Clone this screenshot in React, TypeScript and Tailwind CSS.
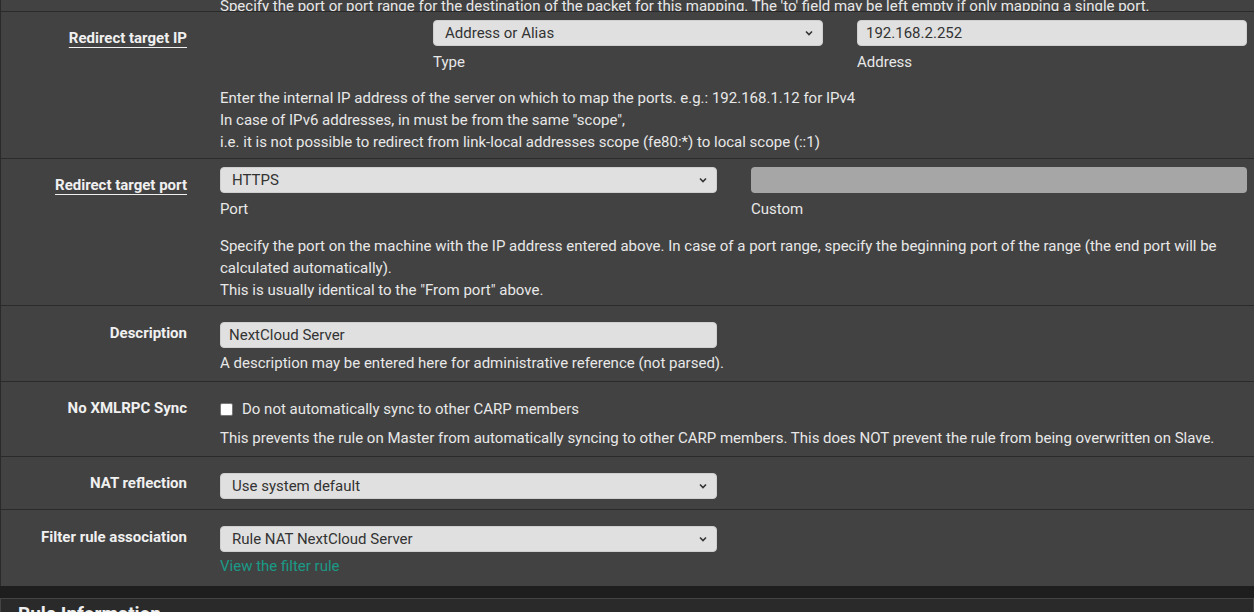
import React from "react";

const Chevron = () => (
  <svg width="10" height="10" viewBox="0 0 10 10" className="shrink-0">
    <path d="M2 3.5 L5 6.5 L8 3.5" fill="none" stroke="#333" strokeWidth="1.6" />
  </svg>
);

const Select = ({ text, cls }: { text: string; cls: string }) => (
  <div className={`h-[26px] rounded-[4px] bg-[#e0e0e0] border border-[#cfcfcf] flex items-center justify-between pl-[11px] pr-[8px] text-[#333] ${cls}`}>
    <span>{text}</span>
    <Chevron />
  </div>
);

const Row = ({ label, underline, children, cls }: { label: string; underline?: boolean; children: React.ReactNode; cls: string }) => (
  <div className={`flex border-b border-[#2a2a2a] ${cls}`}>
    <div className="w-[186px] shrink-0 text-right font-bold text-[#f0f0f0] leading-5">
      <span className={underline ? "underline underline-offset-[4px] decoration-1" : ""}>{label}</span>
    </div>
    <div className="flex-1 pl-[33px] pr-[7px]">{children}</div>
  </div>
);

export default function App() {
  return (
    <div className="w-[1254px] h-[612px] overflow-hidden bg-[#1e1e1e] text-[15px] text-[#e8e8e8]" style={{ fontFamily: "Roboto, 'Liberation Sans', sans-serif" }}>
      <div className="bg-[#424242] border-l border-[#2a2a2a]">
        <div className="h-[12px] overflow-hidden border-b border-[#2a2a2a] relative">
          <div className="absolute left-[219px] -bottom-[5px] whitespace-nowrap leading-5">Specify the port or port range for the destination of the packet for this mapping. The 'to' field may be left empty if only mapping a single port.</div>
        </div>
        <Row label="Redirect target IP" underline cls="h-[147px] pt-[16px]">
          <div className="flex gap-[34px] pl-[213px] -mt-[8px]">
            <div className="w-[390px]">
              <Select text="Address or Alias" cls="w-full" />
              <div className="mt-[5px]">Type</div>
            </div>
            <div className="flex-1">
              <div className="h-[26px] rounded-[4px] bg-[#e0e0e0] border border-[#cfcfcf] flex items-center pl-[8px] text-[#333]">192.168.2.252</div>
              <div className="mt-[5px]">Address</div>
            </div>
          </div>
          <div className="mt-[13px] leading-[22px]">
            <div>Enter the internal IP address of the server on which to map the ports. e.g.: 192.168.1.12 for IPv4</div>
            <div>In case of IPv6 addresses, in must be from the same "scope",</div>
            <div>i.e. it is not possible to redirect from link-local addresses scope (fe80:*) to local scope (::1)</div>
          </div>
        </Row>
        <Row label="Redirect target port" underline cls="h-[147px] pt-[16px]">
          <div className="flex gap-[34px] -mt-[8px]">
            <div className="w-[497px]">
              <Select text="HTTPS" cls="w-full" />
              <div className="mt-[5px]">Port</div>
            </div>
            <div className="flex-1">
              <div className="h-[26px] rounded-[4px] bg-[#a6a6a6]" />
              <div className="mt-[5px]">Custom</div>
            </div>
          </div>
          <div className="mt-[14px] leading-[22px]">
            <div>Specify the port on the machine with the IP address entered above. In case of a port range, specify the beginning port of the range (the end port will be calculated automatically).</div>
            <div>This is usually identical to the "From port" above.</div>
          </div>
        </Row>
        <Row label="Description" cls="h-[76px] pt-[17px]">
          <div className="-mt-[1px] w-[497px] h-[26px] rounded-[4px] bg-[#e0e0e0] border border-[#cfcfcf] flex items-center pl-[8px] text-[#333]">NextCloud Server</div>
          <div className="mt-[4px]">A description may be entered here for administrative reference (not parsed).</div>
        </Row>
        <Row label="No XMLRPC Sync" cls="h-[75px] pt-[16px]">
          <div className="flex items-center gap-[9px]">
            <div className="w-[13px] h-[13px] bg-white rounded-[2px] border border-[#777]" />
            <span>Do not automatically sync to other CARP members</span>
          </div>
          <div className="mt-[6px]">This prevents the rule on Master from automatically syncing to other CARP members. This does NOT prevent the rule from being overwritten on Slave.</div>
        </Row>
        <Row label="NAT reflection" cls="h-[53px] pt-[16px]">
          <Select text="Use system default" cls="w-[497px]" />
        </Row>
        <Row label="Filter rule association" cls="h-[76px] pt-[17px] border-b-0">
          <Select text="Rule NAT NextCloud Server" cls="w-[497px] -mt-[1px]" />
          <div className="mt-[3px] text-[#1a9a86]">View the filter rule</div>
        </Row>
      </div>
      <div className="mt-[12px] bg-[#2a2a2a] border border-[#444] h-[40px] pl-[17px] pt-[1px] text-[19px] font-bold text-[#eee]">Rule Information</div>
    </div>
  );
}
